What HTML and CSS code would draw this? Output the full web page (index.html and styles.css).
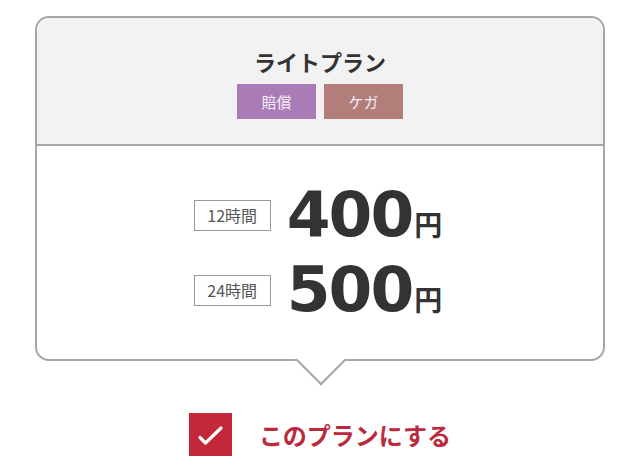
FILE: index.html
```html
<html>
<head>
   <meta charset="utf-8">
   <link rel="stylesheet" href="styles.css">
</head>
<body>
<div class="page">
<div class="plan">
   <div class="plan-head">
      <h2 class="plan-title">ライトプラン</h2>
      <div class="tags">
         <span class="tag tag-bai">賠償</span>
         <span class="tag tag-kega">ケガ</span>
      </div>
   </div>
   <div class="plan-body">
      <div class="price-row">
         <span class="hours">12時間</span>
         <span class="amount">400<span class="yen">円</span></span>
      </div>
      <div class="price-row">
         <span class="hours">24時間</span>
         <span class="amount">500<span class="yen">円</span></span>
      </div>
   </div>
</div>

<label class="choose">
   <span class="check">
      <svg width="43" height="43" viewBox="0 0 43 43">
         <path d="M11 24.5 L16.5 30 L32 15" fill="none" stroke="#fff" stroke-width="3.2" stroke-linecap="round" stroke-linejoin="round"/>
      </svg>
   </span>
   <span class="choose-text">このプランにする</span>
</label>
</div>
</body>
</html>
```

FILE: styles.css
```css
  * {
     box-sizing: border-box;
  }
  body {
     margin: 0;
     background: #fff;
     font-family: "Noto Sans CJK JP", "Noto Sans", sans-serif;
     color: #333;
  }
  .page {
     padding-top: 16px;
     display: flex;
     flex-direction: column;
     align-items: center;
  }

  .plan {
     width: 570px;
     border: 2px solid #a6a6a6;
     border-radius: 14px;
     position: relative;
     background: #fff;
  }
  /* little pointer under the card */
  .plan::after {
     content: "";
     position: absolute;
     left: 50%;
     bottom: -2px;
     width: 34px;
     height: 34px;
     margin-left: -17px;
     margin-bottom: -17px;
     background: #fff;
     border-right: 2px solid #a6a6a6;
     border-bottom: 2px solid #a6a6a6;
     transform: rotate(45deg);
  }

  .plan-head {
     background: #f2f2f2;
     border-radius: 12px 12px 0 0;
     border-bottom: 2px solid #a6a6a6;
     padding: 28px 0 25px;
     text-align: center;
  }
  .plan-title {
     margin: 0;
     font-size: 22px;
     line-height: 30px;
     font-weight: bold;
     color: #333;
  }
  .tags {
     margin-top: 8px;
     display: flex;
     justify-content: center;
     gap: 8px;
  }
  .tag {
     width: 79px;
     height: 35px;
     display: flex;
     align-items: center;
     justify-content: center;
     font-size: 15px;
     color: #f4ecf4;
  }
  .tag-bai {
     background: #a97cb8;
  }
  .tag-kega {
     background: #b37d79;
  }

  .plan-body {
     padding: 39px 0;
     display: flex;
     flex-direction: column;
     gap: 15px;
  }
  .price-row {
     height: 60px;
     display: flex;
     align-items: center;
     justify-content: center;
     gap: 16px;
     padding-right: 4px;
  }
  .hours {
     width: 77px;
     height: 31px;
     border: 1px solid #999;
     display: flex;
     align-items: center;
     justify-content: center;
     font-size: 16px;
     color: #555;
  }
  .amount {
     font-family: "DejaVu Sans", sans-serif;
     font-weight: bold;
     font-size: 63px;
     line-height: 60px;
     letter-spacing: -2px;
     color: #333;
     margin-top: 8px;
  }
  .yen {
     font-family: "Noto Sans CJK JP", sans-serif;
     font-size: 28px;
     letter-spacing: 0;
     margin-left: 2px;
  }

  .choose {
     margin-top: 52px;
     display: flex;
     align-items: center;
     gap: 27px;
     cursor: pointer;
  }
  .check {
     width: 43px;
     height: 43px;
     background: #c2283a;
     display: block;
  }
  .check svg {
     display: block;
  }
  .choose-text {
     font-size: 24px;
     font-weight: bold;
     color: #bb2a3c;
  }
```
